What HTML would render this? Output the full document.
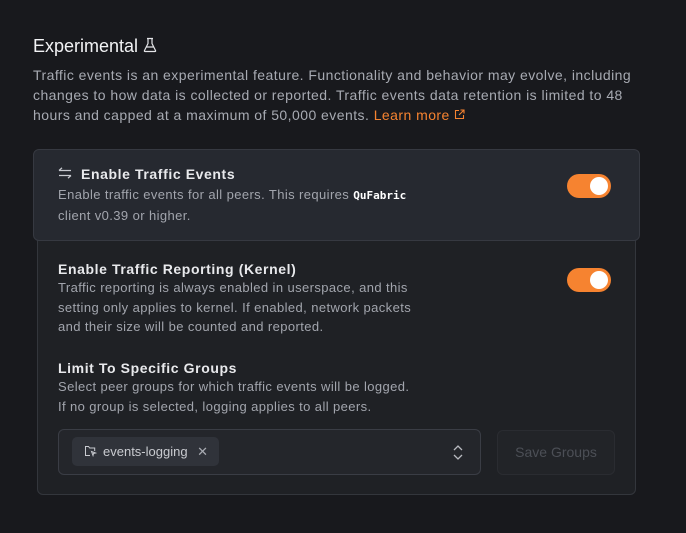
<!DOCTYPE html><html><head><style>
*{box-sizing:border-box;margin:0;padding:0}
body{width:686px;height:533px;background:#18191d;font-family:"Liberation Sans",sans-serif;color:#e4e5e8;position:relative;overflow:hidden}
.abs{position:absolute}
h1{position:absolute;left:33px;top:36px;font-size:18px;font-weight:400;color:#f2f3f5}
.p{position:absolute;left:33px;top:65px;width:640px;font-size:14px;line-height:20px;color:#a7aab2;letter-spacing:.45px;white-space:nowrap}
.p a{color:#f68330;text-decoration:none}
.top{left:33px;top:149px;width:607px;height:92px;background:#262930;border:1px solid #363941;border-radius:6px;z-index:2}
.low{left:37px;top:239px;width:599px;height:256px;background:#1f2125;border:1px solid #33363c;border-radius:0 0 6px 6px}
.t{position:absolute;font-size:14px;font-weight:700;letter-spacing:.6px;color:#e8e9ec}
.d{position:absolute;font-size:13px;line-height:19.5px;color:#a2a5ad;letter-spacing:.4px;white-space:nowrap}
.tg{position:absolute;width:44px;height:24px;background:#f68330;border-radius:12px}
.tg:after{content:"";position:absolute;right:3px;top:3px;width:18px;height:18px;border-radius:50%;background:#fff}
</style></head><body>
<h1>Experimental <svg width="14" height="16" viewBox="0 0 14 16" style="vertical-align:-1px"><path d="M4 1.5h6M5 1.5v5L1.5 13.5q-.5 1 .7 1h9.6q1.2 0 .7-1L9 6.5v-5M3 10h8" fill="none" stroke="#e4e5e8" stroke-width="1.2"/></svg></h1>
<div class="p">Traffic events is an experimental feature. Functionality and behavior may evolve, including<br>changes to how data is collected or reported. Traffic events data retention is limited to 48<br>hours and capped at a maximum of 50,000 events. <a>Learn more <svg width="11" height="11" viewBox="0 0 11 11"><path d="M5 1.5H1.5v8h8V6M6.5 1h3.5v3.5M10 1L5 6" fill="none" stroke="#f68330" stroke-width="1.1"/></svg></a></div>
<div class="abs top">
<svg class="abs" style="left:24px;top:17px" width="14" height="12" viewBox="0 0 14 12"><path d="M13 3.5H1M1 3.5L4 .8M1 8.5h12M13 8.5l-3 2.7" fill="none" stroke="#c8cad0" stroke-width="1.3"/></svg>
<div class="t" style="left:47px;top:16px">Enable Traffic Events</div>
<div class="d" style="left:24px;top:35px">Enable traffic events for all peers. This requires <b style="font-family:'DejaVu Sans Mono',monospace;color:#fff;font-size:11px;letter-spacing:0">QuFabric</b><br>client v0.39 or higher.</div>
<div class="tg" style="left:533px;top:24px"></div>
</div>
<div class="abs low">
<div class="t" style="left:20px;top:21px">Enable Traffic Reporting (Kernel)</div>
<div class="d" style="left:20px;top:38px">Traffic reporting is always enabled in userspace, and this<br>setting only applies to kernel. If enabled, network packets<br>and their size will be counted and reported.</div>
<div class="tg" style="left:529px;top:28px"></div>
<div class="t" style="left:20px;top:120px">Limit To Specific Groups</div>
<div class="d" style="left:20px;top:137px">Select peer groups for which traffic events will be logged.<br>If no group is selected, logging applies to all peers.</div>
<div class="abs" style="left:20px;top:189px;width:423px;height:46px;border:1px solid #3a3d45;border-radius:6px;background:#24262b">
<div class="abs" style="left:13px;top:7px;width:147px;height:29px;background:#30333a;border-radius:5px;font-size:13px;color:#c9cbd0;line-height:29px;padding-left:31px">events-logging <span style="margin-left:6px;color:#a8abb2">✕</span>
<svg class="abs" style="left:12px;top:8px" width="13" height="12" viewBox="0 0 13 12"><path d="M6 10.5H1.5v-9h3l1.2 1.5h5v3M7.5 6.5l4 1.5-2 .5-.5 2z" fill="none" stroke="#c9cbd0" stroke-width="1"/></svg></div>
<svg class="abs" style="left:393px;top:14px" width="12" height="17" viewBox="0 0 12 17"><path d="M2 6l4-4 4 4M2 11l4 4 4-4" fill="none" stroke="#b8bac0" stroke-width="1.3"/></svg>
</div>
<div class="abs" style="left:459px;top:190px;width:118px;height:45px;border:1px solid #2a2c31;border-radius:6px;background:#222428;color:#4c4f56;font-size:14px;line-height:43px;text-align:center">Save Groups</div>
</div>
</body></html>
